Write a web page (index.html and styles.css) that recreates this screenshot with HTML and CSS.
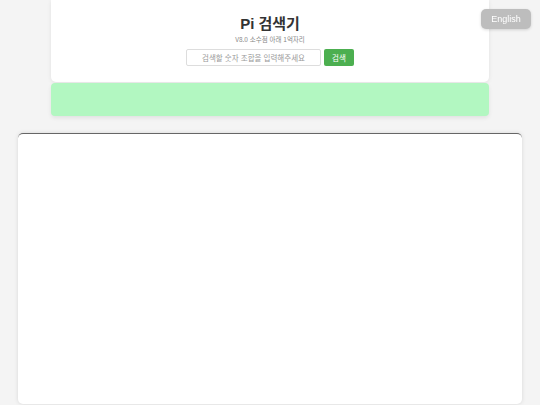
FILE: index.html
```html
<!DOCTYPE html>
<html lang="ko">
<head>
<meta charset="utf-8">
<link rel="stylesheet" href="styles.css">
</head>
<body>
<div class="page">
  <header class="header">
    <h1 class="title">Pi 검색기</h1>
    <p class="subtitle">V8.0 소수점 아래 1억자리</p>
    <div class="search">
      <input class="search-input" type="text" placeholder="검색할 숫자 조합을 입력해주세요">
      <button class="search-btn">검색</button>
    </div>
  </header>
  <div class="status"></div>
  <section class="result"></section>
</div>
<button class="lang-btn">English</button>
</body>
</html>
```
FILE: styles.css
```css
* { box-sizing: border-box; }
html, body { margin: 0; padding: 0; }
body {
  background: #f4f4f4;
  font-family: "Noto Sans CJK KR", "Noto Sans", sans-serif;
  height: 405px;
  overflow: hidden;
}
.page {
  display: flex;
  flex-direction: column;
  align-items: center;
}
.header {
  width: 438px;
  height: 82px;
  background: #fff;
  border-radius: 0 0 5px 5px;
  box-shadow: 0 1px 4px rgba(0,0,0,0.08);
  display: flex;
  flex-direction: column;
  align-items: center;
  padding-top: 14px;
}
.title {
  margin: 0;
  font-family: "Liberation Sans", "Noto Sans CJK KR", sans-serif;
  font-size: 15px;
  line-height: 20px;
  font-weight: bold;
  color: #333;
}
.subtitle {
  margin: 1px 0 0;
  font-size: 6.5px;
  line-height: 9px;
  color: #888;
}
.search {
  display: flex;
  gap: 3px;
  margin-top: 5px;
}
.search-input {
  width: 135px;
  height: 17px;
  border: 1px solid #ddd;
  border-radius: 2px;
  padding: 0 4px;
  font-size: 7.5px;
  text-align: center;
  font-family: "Noto Sans CJK KR", sans-serif;
  color: #333;
  outline: none;
}
.search-input::placeholder { color: #999; }
.search-btn {
  width: 30px;
  height: 17px;
  border: none;
  border-radius: 2px;
  background: #4caf50;
  color: #fff;
  font-size: 7.5px;
  font-family: "Noto Sans CJK KR", sans-serif;
  padding: 0;
}
.status {
  width: 438px;
  height: 33px;
  margin-top: 1px;
  background: #b2f7c1;
  border-radius: 4px;
  box-shadow: 0 2px 4px rgba(0,0,0,0.08);
}
.result {
  width: 504px;
  height: 271px;
  margin-top: 17px;
  background: #fff;
  border-top: 1px solid #666;
  border-radius: 5px;
  box-shadow: 0 0 4px rgba(0,0,0,0.12);
}
.lang-btn {
  position: fixed;
  top: 9px;
  right: 9px;
  width: 50px;
  height: 20px;
  border: none;
  border-radius: 5px;
  background: #bdbdbd;
  color: #fff;
  font-family: "Liberation Sans", sans-serif;
  font-size: 9px;
  box-shadow: 0 1px 3px rgba(0,0,0,0.15);
  padding: 0;
}
```
